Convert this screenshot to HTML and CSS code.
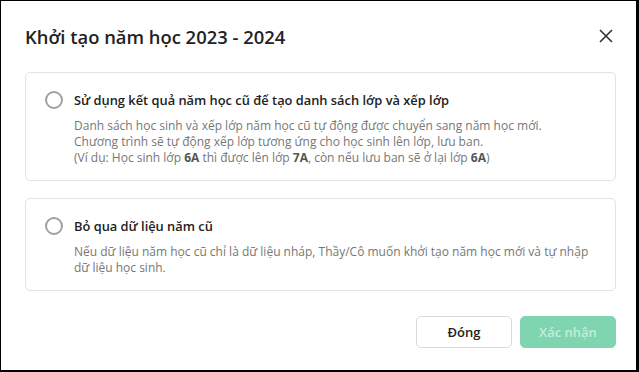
FILE: index.html
```html
<!DOCTYPE html>
<html lang="vi">

<head>
    <meta charset="UTF-8">
    <meta name="viewport" content="width=device-width, initial-scale=1.0">
    <title>Khởi tạo năm học</title>
    <link rel="stylesheet" href="styles.css">
</head>

<body>
    <div class="modal">
        <div class="modal-header">
            <h1 class="modal-title">Khởi tạo năm học 2023 - 2024</h1>
            <button class="close-btn" aria-label="Đóng">
                <svg width="16" height="16" viewBox="0 0 16 16">
                    <path d="M2 2 L14 14 M14 2 L2 14" stroke="#333" stroke-width="1.6" fill="none" />
                </svg>
            </button>
        </div>

        <div class="modal-body">
            <label class="option">
                <span class="radio"></span>
                <span class="option-text">
                    <span class="option-title">Sử dụng kết quả năm học cũ để tạo danh sách lớp và xếp lớp</span>
                    <span class="option-desc">Danh sách học sinh và xếp lớp năm học cũ tự động được chuyển sang năm học mới.<br>
                        Chương trình sẽ tự động xếp lớp tương ứng cho học sinh lên lớp, lưu ban.<br>
                        (Ví dụ: Học sinh lớp <b>6A</b> thì được lên lớp <b>7A</b>, còn nếu lưu ban sẽ ở lại lớp <b>6A</b>)</span>
                </span>
            </label>

            <label class="option">
                <span class="radio"></span>
                <span class="option-text">
                    <span class="option-title">Bỏ qua dữ liệu năm cũ</span>
                    <span class="option-desc">Nếu dữ liệu năm học cũ chỉ là dữ liệu nháp, Thầy/Cô muốn khởi tạo năm học mới và tự nhập<br>
                        dữ liệu học sinh.</span>
                </span>
            </label>
        </div>

        <div class="modal-footer">
            <button class="btn btn-outline">Đóng</button>
            <button class="btn btn-primary" disabled>Xác nhận</button>
        </div>
    </div>
</body>

</html>
```

FILE: styles.css
```css
/* Reset */
* {
    margin: 0;
    padding: 0;
    box-sizing: border-box;
}

body {
    font-family: 'Open Sans', 'Noto Sans', sans-serif;
    color: #333;
    background: #000;
    padding: 1px 3px 2px 1px;
    width: 639px;
    height: 372px;
}

.modal {
    background: white;
    height: 369px;
    padding: 0 20px 0 24px;
    display: flex;
    flex-direction: column;
}

.modal-header {
    display: flex;
    justify-content: space-between;
    align-items: center;
    height: 71px;
}

.modal-title {
    font-size: 18.4px;
    font-weight: 600;
    color: #222;
    padding-bottom: 1px;
}

.close-btn {
    background: none;
    border: none;
    width: 16px;
    height: 16px;
    margin-right: 2px;
    margin-bottom: 2px;
    cursor: pointer;
}

.modal-body {
    display: flex;
    flex-direction: column;
    gap: 17px;
}

.option {
    display: flex;
    gap: 11px;
    border: 1px solid #e2e2e2;
    border-radius: 5px;
    padding: 17px 16px 14px 19px;
    cursor: pointer;
}

.radio {
    flex-shrink: 0;
    width: 18px;
    height: 18px;
    margin-top: 1px;
    border: 2px solid #a0a0a0;
    border-radius: 50%;
}

.option-text {
    display: flex;
    flex-direction: column;
    gap: 8px;
}

.option-title {
    font-size: 12.85px;
    font-weight: 600;
    line-height: 20px;
    color: #222;
}

.option-desc {
    font-size: 12px;
    line-height: 16px;
    color: #777;
}

.option-desc b {
    font-weight: 700;
    color: #555;
}

.modal-footer {
    display: flex;
    justify-content: flex-end;
    gap: 8px;
    margin-top: 25px;
}

.btn {
    width: 96px;
    height: 32px;
    border-radius: 5px;
    font-family: inherit;
    font-size: 13px;
    font-weight: 600;
    cursor: pointer;
}

.btn-outline {
    background: white;
    border: 1px solid #d9d9d9;
    color: #222;
}

.btn-primary {
    background: #7fd5b0;
    border: 1px solid #7fd5b0;
    color: #c4eedb;
}
```
